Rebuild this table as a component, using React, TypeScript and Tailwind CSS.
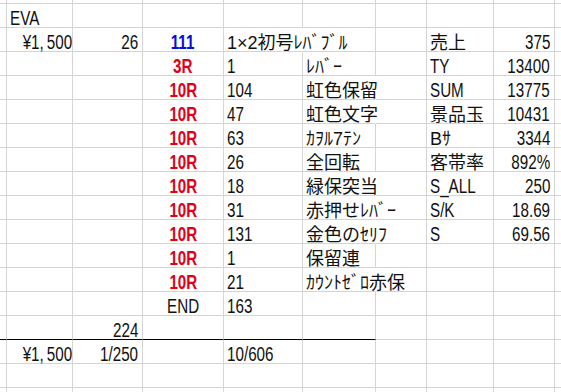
import React from 'react';

type Cell = {
  t: React.ReactNode;
  a?: 'l' | 'r' | 'c';
  c?: 'red' | 'blue';
  jp?: boolean;
  noR?: boolean;
};

type Row = { [col: string]: Cell };

const COLS = ['_', 'A', 'B', 'C', 'D', 'E', 'F', 'G', 'H', 'Z'];

const yen = (
  <>
    ¥1<span className="mr-1">,</span>500
  </>
);

const r10 = (n: string, label: string, g?: string, h?: string, noR?: boolean, gJp?: boolean): Row => {
  const row: Row = {
    C: { t: '10R', a: 'c', c: 'red' },
    D: { t: n },
    E: { t: label, jp: true, noR },
  };
  if (g) row.G = { t: g, jp: gJp };
  if (h) row.H = { t: h, a: 'r' };
  return row;
};

const rows: Row[] = [
  { A: { t: 'EVA' } },
  {
    A: { t: yen, a: 'r' },
    B: { t: '26', a: 'r' },
    C: { t: '111', a: 'c', c: 'blue' },
    D: { t: '1×2初号ﾚﾊﾞﾌﾞﾙ', jp: true, noR: true },
    G: { t: '売上', jp: true },
    H: { t: '375', a: 'r' },
  },
  {
    C: { t: '3R', a: 'c', c: 'red' },
    D: { t: '1' },
    E: { t: 'ﾚﾊﾞｰ', jp: true },
    G: { t: 'TY' },
    H: { t: '13400', a: 'r' },
  },
  r10('104', '虹色保留', 'SUM', '13775', true),
  r10('47', '虹色文字', '景品玉', '10431', true, true),
  r10('63', 'ｶｦﾙ7ﾃﾝ', 'Bｻ', '3344', false, true),
  r10('26', '全回転', '客帯率', '892%', false, true),
  r10('18', '緑保突当', 'S_ALL', '250', true),
  r10('31', '赤押せﾚﾊﾞｰ', 'S/K', '18.69', true),
  r10('131', '金色のｾﾘﾌ', 'S', '69.56', true),
  r10('1', '保留連'),
  r10('21', 'ｶｳﾝﾄｾﾞﾛ赤保', undefined, undefined, true),
  {
    C: { t: 'END', a: 'c' },
    D: { t: '163' },
  },
  { B: { t: '224', a: 'r' } },
  {
    A: { t: yen, a: 'r' },
    B: { t: '1/250', a: 'r' },
    D: { t: '10/606' },
  },
  {},
];

// latin text in the sheet font is tall and narrow, so squeeze it horizontally
const Narrow: React.FC<{ a?: Cell['a']; children: React.ReactNode }> = ({ a, children }) => {
  const origin = a === 'r' ? 'origin-right' : a === 'c' ? 'origin-center' : 'origin-left';
  return <span className={`inline-block scale-x-[0.76] ${origin}`}>{children}</span>;
};

const SheetCell: React.FC<{ cell?: Cell; col: string; blackBottom: boolean }> = ({ cell, col, blackBottom }) => {
  const last = col === 'Z';
  const align = cell?.a === 'r' ? 'text-right pr-1' : cell?.a === 'c' ? 'text-center' : 'text-left pl-[3px]';
  const color =
    cell?.c === 'red' ? 'text-[#e0001a] font-bold' : cell?.c === 'blue' ? 'text-[#0a0ae0] font-bold' : 'text-[#111]';
  const size = cell?.jp ? 'text-[18px] pt-[6px] leading-[18px]' : 'text-[20px] pt-[4px] leading-[21px]';
  const right = last ? '' : cell?.noR ? 'border-r border-r-transparent' : 'border-r border-r-[#d4d4d4]';
  const bottom = blackBottom ? 'border-b border-b-black' : 'border-b border-b-[#d4d4d4]';
  return (
    <div className={`h-6 whitespace-nowrap ${right} ${bottom} ${align} ${color} ${size}`}>
      {cell && (cell.jp ? cell.t : <Narrow a={cell.a}>{cell.t}</Narrow>)}
    </div>
  );
};

export default function App() {
  return (
    <div className="w-[561px] h-[392px] overflow-hidden bg-white font-['Liberation_Sans','Noto_Sans_CJK_JP',sans-serif]">
      <div className="grid grid-cols-[7px_66px_70px_81px_79px_73px_51px_67px_61px_1fr]">
        {COLS.map((c) => (
          <div key={`top-${c}`} className={`h-1 border-b border-b-[#d4d4d4] ${c === 'Z' ? '' : 'border-r border-r-[#d4d4d4]'}`} />
        ))}
        {rows.map((row, i) =>
          COLS.map((c) => (
            <SheetCell
              key={`${i}-${c}`}
              cell={row[c]}
              col={c}
              blackBottom={i === 13 && ['_', 'A', 'B', 'C', 'D', 'E'].includes(c)}
            />
          ))
        )}
        {COLS.map((c) => (
          <div key={`bot-${c}`} className={`h-1 ${c === 'Z' ? '' : 'border-r border-r-[#d4d4d4]'}`} />
        ))}
      </div>
    </div>
  );
}
